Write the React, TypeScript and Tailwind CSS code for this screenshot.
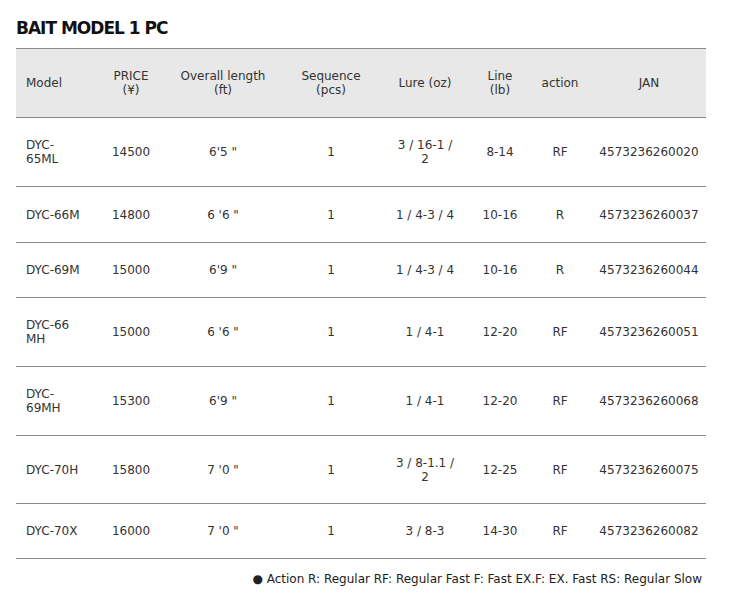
const cols = [
  { w: 'w-[84px]', align: 'text-left pl-[10px]' },
  { w: 'w-[62px]', align: 'text-center' },
  { w: 'w-[122px]', align: 'text-center' },
  { w: 'w-[94px]', align: 'text-center' },
  { w: 'w-[94px]', align: 'text-center' },
  { w: 'w-[56px]', align: 'text-center' },
  { w: 'w-[64px]', align: 'text-center' },
  { w: 'w-[114px]', align: 'text-center' },
]

const header = ['Model', 'PRICE\n(¥)', 'Overall length\n(ft)', 'Sequence\n(pcs)', 'Lure (oz)', 'Line\n(lb)', 'action', 'JAN']

const rows: { h: string; cells: string[] }[] = [
  { h: 'h-[69px]', cells: ['DYC-\n65ML', '14500', '6\'5 "', '1', '3 / 16-1 /\n2', '8-14', 'RF', '4573236260020'] },
  { h: 'h-[56px]', cells: ['DYC-66M', '14800', '6 \'6 "', '1', '1 / 4-3 / 4', '10-16', 'R', '4573236260037'] },
  { h: 'h-[55px]', cells: ['DYC-69M', '15000', '6\'9 "', '1', '1 / 4-3 / 4', '10-16', 'R', '4573236260044'] },
  { h: 'h-[69px]', cells: ['DYC-66\nMH', '15000', '6 \'6 "', '1', '1 / 4-1', '12-20', 'RF', '4573236260051'] },
  { h: 'h-[69px]', cells: ['DYC-\n69MH', '15300', '6\'9 "', '1', '1 / 4-1', '12-20', 'RF', '4573236260068'] },
  { h: 'h-[68px]', cells: ['DYC-70H', '15800', '7 \'0 "', '1', '3 / 8-1.1 /\n2', '12-25', 'RF', '4573236260075'] },
  { h: 'h-[55px]', cells: ['DYC-70X', '16000', '7 \'0 "', '1', '3 / 8-3', '14-30', 'RF', '4573236260082'] },
]

function Row({ h, cells, head }: { h: string; cells: string[]; head?: boolean }) {
  return (
    <div className={`flex items-center border-t border-[#8a8a8a] ${h} ${head ? 'bg-[#e8e8e8]' : ''}`}>
      {cells.map((c, i) => (
        <div key={i} className={`${cols[i].w} ${cols[i].align} shrink-0 whitespace-pre-line leading-[14px]`}>
          {c}
        </div>
      ))}
    </div>
  )
}

export default function App() {
  return (
    <div className="w-[731px] h-[611px] bg-white px-4 pt-[16px] text-[12px] text-[#333]" style={{ fontFamily: '"DejaVu Sans", sans-serif' }}>
      <h1 className="text-[17px] font-bold text-[#111] leading-[24px] mb-[8px] tracking-[-1px]">
        BAIT MODEL 1 PC
      </h1>
      <div className="w-[690px]">
        <Row h="h-[69px]" cells={header} head />
        {rows.map((r, i) => (
          <Row key={i} h={r.h} cells={r.cells} />
        ))}
        <div className="border-t border-[#8a8a8a]" />
      </div>
      <div className="w-[686px] text-right mt-[11px] text-[12px] text-[#222]">● Action R: Regular RF: Regular Fast F: Fast EX.F: EX. Fast RS: Regular Slow</div>
    </div>
  )
}
